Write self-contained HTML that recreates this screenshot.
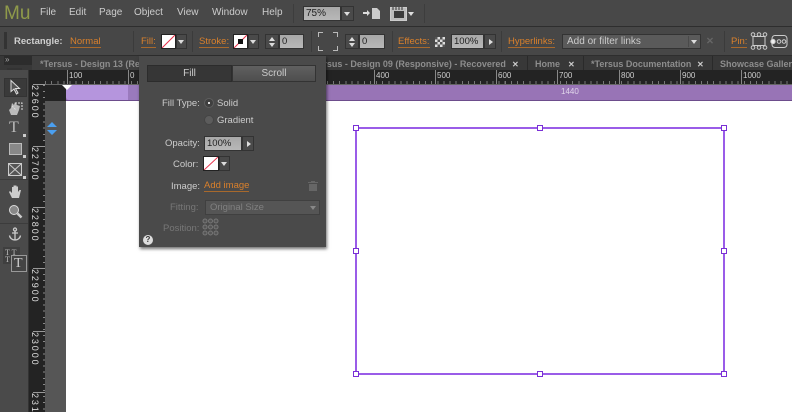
<!DOCTYPE html>
<html><head><meta charset="utf-8">
<style>
*{box-sizing:border-box;margin:0;padding:0}
html,body{width:792px;height:412px;overflow:hidden;background:#fff}
body{position:relative;font-family:"Liberation Sans",sans-serif;font-size:9.5px;color:#ccc}
.a{position:absolute}
.t{position:absolute;white-space:nowrap;line-height:12px}
.o{color:#d9802c;border-bottom:1px solid #a8692c;line-height:10px}
.b{font-weight:bold}
.m{font-size:10px;top:7px}
.btn{position:absolute;background:#4a4a4a;border:1px solid #333}
.inp{position:absolute;background:linear-gradient(#a8a8a8,#b8b8b8);border:1px solid #333;color:#222;line-height:13px;padding-left:2px;white-space:nowrap}
.ar{position:absolute;width:0;height:0;border-left:3px solid transparent;border-right:3px solid transparent;border-top:4px solid #ddd}
.ri{position:absolute;width:0;height:0;border-top:3px solid transparent;border-bottom:3px solid transparent;border-left:4px solid #ddd}
.sw{position:absolute;background:#fff;border:1px solid #222;overflow:hidden}
.tab{position:absolute;top:58px;color:#8d8d8d;font-weight:bold;font-size:9px;line-height:13px;white-space:nowrap}
.x{color:#ccc;font-size:8px}
.sp{position:absolute;top:56px;width:1px;height:14px;background:#2a2a2a}
.sep{position:absolute;top:31px;width:1px;height:21px;background:#3b3b3b}
.rl{position:absolute;top:70px;color:#ccc;font-size:8px;line-height:12px;border-left:1px solid #888;padding-left:1px;height:14px}
.vl{position:absolute;left:30px;width:9px;color:#ddd;font-size:9px;line-height:9px;writing-mode:vertical-rl;letter-spacing:1.9px;white-space:nowrap}
.vt{position:absolute;left:33px;width:12px;height:1px;background:#999}
.h{position:absolute;width:6px;height:6px;background:#fff;border:1px solid #7a2fd6}
</style></head><body>

<div class="a" style="left:0;top:0;width:792px;height:27px;background:#484848;border-bottom:1px solid #2e2e2e"></div>
<div class="t" style="left:4px;top:3px;font-size:19px;line-height:21px;color:#8f9a4a">Mu</div>
<div class="t m" style="left:40px">File</div>
<div class="t m" style="left:69px">Edit</div>
<div class="t m" style="left:99px">Page</div>
<div class="t m" style="left:134px">Object</div>
<div class="t m" style="left:177px">View</div>
<div class="t m" style="left:212px">Window</div>
<div class="t m" style="left:262px">Help</div>
<div class="a" style="left:293px;top:4px;width:1px;height:19px;background:#3d3d3d"></div>
<div class="inp" style="left:303px;top:6px;width:38px;height:15px;font-size:10px">75%</div>
<div class="btn" style="left:341px;top:6px;width:13px;height:15px"></div><div class="ar" style="left:344px;top:12px"></div>
<svg class="a" style="left:362px;top:7px" width="18" height="12" fill="#ddd"><path d="M1 5h4V3l3 3-3 3V7H1z"/><path d="M10 1h5l3 3v8h-8z" fill="#ccc"/></svg>
<svg class="a" style="left:390px;top:7px" width="24" height="14"><rect x=".5" y=".5" width="16" height="13" fill="#bbb" stroke="#ccc"/><rect x="4" y="4" width="10" height="7" fill="#3a3a3a"/><path d="M3 0v3M6 0v3M9 0v3M12 0v3" stroke="#333"/><path d="M18 5h6l-3 4z" fill="#ddd"/></svg>
<div class="a" style="left:424px;top:4px;width:1px;height:19px;background:#3d3d3d"></div>

<div class="a" style="left:0;top:27px;width:792px;height:29px;background:#474747;border-bottom:1px solid #2e2e2e"></div>
<div class="a" style="left:4px;top:32px;width:3px;height:17px;background:#333"></div>
<div class="sep" style="left:133px"></div><div class="sep" style="left:192px"></div><div class="sep" style="left:311px"></div><div class="sep" style="left:392px"></div><div class="sep" style="left:501px"></div><div class="sep" style="left:724px"></div>
<div class="t b" style="left:14px;top:36px;font-size:9.5px;color:#d0d0d0">Rectangle:</div>
<div class="t o" style="left:70px;top:37px">Normal</div>
<div class="t o" style="left:141px;top:37px">Fill:</div>
<div class="sw" style="left:161px;top:34px;width:15px;height:15px"><svg width="13" height="13" style="display:block"><line x1="0" y1="13" x2="13" y2="0" stroke="#e8304a"/></svg></div>
<div class="btn" style="left:176px;top:34px;width:11px;height:15px"></div><div class="ar" style="left:178px;top:40px"></div>
<div class="t o" style="left:199px;top:37px">Stroke:</div>
<div class="sw" style="left:233px;top:34px;width:15px;height:15px"><svg width="13" height="13" style="display:block"><line x1="0" y1="13" x2="13" y2="0" stroke="#e8304a"/><rect x="4" y="4" width="5" height="5" fill="#111"/></svg></div>
<div class="btn" style="left:248px;top:34px;width:11px;height:15px"></div><div class="ar" style="left:250px;top:40px"></div>
<div class="btn" style="left:265px;top:34px;width:14px;height:15px"></div>
<div class="inp" style="left:279px;top:34px;width:25px;height:15px">0</div>
<div class="ar" style="left:269px;top:43px"></div><div class="ar" style="left:269px;top:37px;transform:rotate(180deg)"></div>
<svg class="a" style="left:318px;top:32px" width="20" height="19" fill="none" stroke="#bbb"><path d="M.5 5V.5H5M15 .5h4.500V5M.5 14v4.500H5M15 18.500h4.500V14"/></svg>
<div class="btn" style="left:345px;top:34px;width:14px;height:15px"></div>
<div class="inp" style="left:359px;top:34px;width:26px;height:15px">0</div>
<div class="ar" style="left:349px;top:43px"></div><div class="ar" style="left:349px;top:37px;transform:rotate(180deg)"></div>
<div class="t o" style="left:398px;top:37px">Effects:</div>
<div class="a" style="left:435px;top:37px;width:10px;height:10px;background:repeating-conic-gradient(#ddd 0 25%,#555 0 50%) 0 0/5px 5px"></div>
<div class="inp" style="left:451px;top:34px;width:33px;height:15px">100%</div>
<div class="btn" style="left:484px;top:34px;width:12px;height:15px"></div><div class="ri" style="left:489px;top:39px"></div>
<div class="t o" style="left:508px;top:37px">Hyperlinks:</div>
<div class="a" style="left:562px;top:34px;width:139px;height:15px;background:#5a5a5a;border:1px solid #333;color:#ccc;line-height:13px;padding-left:4px;white-space:nowrap;font-size:10px">Add or filter links</div>
<div class="a" style="left:688px;top:36px;width:1px;height:11px;background:#4a4a4a"></div>
<div class="ar" style="left:691px;top:40px"></div>
<div class="t" style="left:706px;top:36px;color:#666;font-weight:bold">✕</div>
<div class="t o" style="left:731px;top:37px">Pin:</div>
<svg class="a" style="left:750px;top:32px" width="42" height="18" fill="none" stroke="#ccc"><path d="M3 4v10M15 4v10M3 4.500h12M3 13.500h12"/><g fill="#474747"><circle cx="3" cy="2.500" r="1.800"/><circle cx="9" cy="2.500" r="1.800"/><circle cx="15" cy="2.500" r="1.800"/><circle cx="3" cy="15.500" r="1.800"/><circle cx="9" cy="15.500" r="1.800"/><circle cx="15" cy="15.500" r="1.800"/></g><rect x="22" y="3.500" width="15" height="12" rx="3"/><circle cx="23" cy="9.500" r="2.200" fill="#eee"/><circle cx="29" cy="9.500" r="1.800"/><circle cx="34" cy="9.500" r="1.800"/></svg>

<div class="a" style="left:0;top:56px;width:792px;height:14px;background:#383838"></div>
<div class="a" style="left:32px;top:56px;width:110px;height:14px;background:#3f3f3f"></div>
<div class="a" style="left:4px;top:56px;width:28px;height:9px;background:#2c2c2c"></div>
<div class="t" style="left:5px;top:54px;font-size:8px;color:#aaa">»</div>
<div class="a" style="left:7px;top:68px;width:15px;height:3px;background:#333"></div>
<div class="tab" style="left:40px">*Tersus - Design 13 (Responsive)</div>
<div class="tab" style="left:310px">*Tersus - Design 09 (Responsive) - Recovered</div>
<div class="tab x" style="left:512px">✕</div>
<div class="sp" style="left:527px"></div>
<div class="tab" style="left:535px">Home</div>
<div class="tab x" style="left:568px">✕</div>
<div class="sp" style="left:583px"></div>
<div class="tab" style="left:591px">*Tersus Documentation</div>
<div class="tab x" style="left:697px">✕</div>
<div class="sp" style="left:712px"></div>
<div class="tab" style="left:720px">Showcase Gallery</div>

<div class="a" style="left:32px;top:70px;width:760px;height:15px;background:#232323"></div>
<div class="a" style="left:45px;top:81px;width:747px;height:3px;background:repeating-linear-gradient(90deg,#777 0 1px,transparent 1px 6.130px)"></div>
<div class="a" style="left:45px;top:84px;width:747px;height:1px;background:#666"></div>
<div class="rl" style="left:67px">100</div>
<div class="rl" style="left:128px">0</div>
<div class="rl" style="left:374px">400</div>
<div class="rl" style="left:435px">500</div>
<div class="rl" style="left:496px">600</div>
<div class="rl" style="left:557px">700</div>
<div class="rl" style="left:619px">800</div>
<div class="rl" style="left:680px">900</div>
<div class="rl" style="left:741px">1000</div>

<div class="a" style="left:66px;top:101px;width:726px;height:311px;background:#fff"></div>
<div class="a" style="left:66px;top:85px;width:726px;height:16px;background:#9874b6;border-bottom:1px solid #6d4d8c"></div>
<div class="a" style="left:66px;top:85px;width:62px;height:15px;background:#b595dd;border-radius:3px 0 0 3px"></div>
<div class="a" style="left:128px;top:85px;width:12px;height:15px;background:#9a7abd"></div>
<div class="t" style="left:561px;top:86px;font-size:8px;color:#e0d5ea">1440</div>

<div class="a" style="left:0;top:70px;width:29px;height:342px;background:#4a4a4a;border-right:1px solid #333"></div>
<div class="a" style="left:29px;top:70px;width:16px;height:342px;background:#232323"></div>
<div class="a" style="left:45px;top:85px;width:21px;height:327px;background:#565656"></div>
<div class="a" style="left:43px;top:85px;width:2px;height:327px;background:repeating-linear-gradient(#888 0 1px,transparent 1px 6.100px)"></div>
<div class="a" style="left:45px;top:85px;width:21px;height:16px;background:#232323"></div>
<div class="a" style="left:62px;top:85px;width:0;height:0;border-left:5px solid transparent;border-right:5px solid transparent;border-top:5px solid #fff"></div>

<div class="vt" style="top:84px"></div><div class="vl" style="top:85px">22600</div>
<div class="vt" style="top:146px"></div><div class="vl" style="top:147px">22700</div>
<div class="vt" style="top:207px"></div><div class="vl" style="top:208px">22800</div>
<div class="vt" style="top:268px"></div><div class="vl" style="top:269px">22900</div>
<div class="vt" style="top:331px"></div><div class="vl" style="top:332px">23000</div>
<div class="vt" style="top:392px"></div><div class="vl" style="top:393px">231</div>

<svg class="a" style="left:46px;top:122px" width="12" height="13"><path d="M6 0l5 5H1zM6 13l5-5H1z" fill="#4a9ff0"/></svg>

<div class="a" style="left:4px;top:78px;width:23px;height:19px;background:#3a3a3a;border:1px solid #333"></div>
<svg class="a" style="left:9px;top:79px" width="12" height="17"><path d="M2 1.500v11l3-2.500 2.500 5 1.500-1-2.500-4.500h4z" fill="#555" stroke="#ddd"/></svg>
<svg class="a" style="left:7px;top:99px" width="18" height="18"><path d="M4 16l-2-5 2-2 1-5 2 2 1-3 2 3 3 1-1 4-2 5z" fill="#bbb"/><path d="M8 4h7v7M5 7l4 4" stroke="#ddd" fill="none" stroke-dasharray="2 1"/></svg>
<div class="t" style="left:9px;top:120px;font-family:'Liberation Serif',serif;font-size:16px;line-height:16px;color:#bbb">T</div>
<div class="a" style="left:23px;top:134px;width:3px;height:3px;background:#ccc"></div>
<div class="a" style="left:9px;top:143px;width:13px;height:12px;background:#888;border:1px solid #bbb"></div>
<div class="a" style="left:23px;top:155px;width:3px;height:3px;background:#ccc"></div>
<svg class="a" style="left:8px;top:163px" width="14" height="13"><rect x=".5" y=".5" width="13" height="12" fill="#555" stroke="#ccc"/><path d="M1 1l12 11M13 1L1 12" stroke="#ccc"/></svg>
<div class="a" style="left:23px;top:176px;width:3px;height:3px;background:#ccc"></div>
<div class="a" style="left:0;top:179px;width:28px;height:1px;background:#3c3c3c"></div>
<svg class="a" style="left:8px;top:184px" width="15" height="15"><path d="M4 14L1 8l1-1 2 2V3h1.500v4V1.500H7V7V1.500h1.500V7V2.500H10V8l1.500-2H13l-2 8z" fill="#ccc"/></svg>
<svg class="a" style="left:8px;top:204px" width="15" height="15" fill="none"><circle cx="6" cy="6" r="4.500" fill="#888" stroke="#ddd"/><path d="M9.500 9.500l4 4" stroke="#ccc" stroke-width="2.500"/></svg>
<div class="a" style="left:0;top:223px;width:28px;height:1px;background:#3c3c3c"></div>
<svg class="a" style="left:8px;top:227px" width="14" height="14" fill="none" stroke="#ccc" stroke-width="1.300"><circle cx="7" cy="2.500" r="1.500"/><path d="M7 4v9M4 6h6M1.500 8.500C2 11.500 4.500 13 7 13s5-1.500 5.500-4.500"/></svg>
<div class="a" style="left:3px;top:247px;width:17px;height:17px;background:#3f3f3f"></div>
<div class="t" style="left:5px;top:249px;font-family:'Liberation Serif',serif;font-size:8px;line-height:7px;color:#bbb;white-space:pre">T T
T</div>
<div class="a" style="left:11px;top:255px;width:16px;height:17px;background:#444;border:1px solid #999"></div>
<div class="t" style="left:14px;top:256px;font-family:'Liberation Serif',serif;font-size:14px;line-height:15px;color:#ccc">T</div>

<div class="a" style="left:355px;top:127px;width:370px;height:248px;border:2px solid #9a5ce8"></div>
<div class="h" style="left:353px;top:125px"></div>
<div class="h" style="left:537px;top:125px"></div>
<div class="h" style="left:721px;top:125px"></div>
<div class="h" style="left:353px;top:248px"></div>
<div class="h" style="left:721px;top:248px"></div>
<div class="h" style="left:353px;top:371px"></div>
<div class="h" style="left:537px;top:371px"></div>
<div class="h" style="left:721px;top:371px"></div>

<div class="a" style="left:139px;top:56px;width:187px;height:191px;background:#4a4a4a;box-shadow:1px 2px 3px rgba(0,0,0,.55)"></div>
<div class="a" style="left:147px;top:65px;width:85px;height:17px;background:#363636;border:1px solid #2c2c2c;color:#ccc;text-align:center;line-height:15px;font-size:10px">Fill</div>
<div class="a" style="left:232px;top:65px;width:84px;height:17px;background:linear-gradient(#606060,#4e4e4e);border:1px solid #333;color:#ccc;text-align:center;line-height:15px;font-size:10px">Scroll</div>
<div class="t" style="left:162px;top:98px">Fill Type:</div>
<div class="a" style="left:204px;top:98px;width:10px;height:10px;border-radius:50%;background:#3f3f3f;border:1px solid #5e5e5e"></div>
<div class="a" style="left:208px;top:102px;width:2px;height:2px;background:#ddd"></div>
<div class="t" style="left:217px;top:98px">Solid</div>
<div class="a" style="left:204px;top:115px;width:10px;height:10px;border-radius:50%;background:#5c5c5c;border:1px solid #444"></div>
<div class="t" style="left:217px;top:115px">Gradient</div>
<div class="t" style="left:165px;top:138px">Opacity:</div>
<div class="inp" style="left:204px;top:136px;width:38px;height:15px">100%</div>
<div class="btn" style="left:242px;top:136px;width:12px;height:15px"></div><div class="ri" style="left:247px;top:141px"></div>
<div class="t" style="left:173px;top:159px">Color:</div>
<div class="sw" style="left:203px;top:156px;width:16px;height:15px"><svg width="14" height="13" style="display:block"><line x1="0" y1="13" x2="14" y2="0" stroke="#e8304a"/></svg></div>
<div class="btn" style="left:219px;top:156px;width:11px;height:15px"></div><div class="ar" style="left:221px;top:162px"></div>
<div class="t" style="left:171px;top:181px">Image:</div>
<div class="t o" style="left:204px;top:181px">Add image</div>
<svg class="a" style="left:308px;top:181px" width="10" height="10" fill="#666"><path d="M3 0h4v1h3v1H0V1h3zM1 3h8v7H1z"/></svg>
<div class="t" style="left:170px;top:202px;color:#777">Fitting:</div>
<div class="a" style="left:205px;top:200px;width:115px;height:15px;background:#555;border:1px solid #404040;color:#808080;line-height:13px;padding-left:4px;white-space:nowrap">Original Size</div>
<div class="ar" style="left:310px;top:206px;border-top-color:#888"></div>
<div class="t" style="left:163px;top:223px;color:#777">Position:</div>
<svg class="a" style="left:202px;top:218px" width="18" height="18" fill="#555" stroke="#777"><circle cx="3" cy="3" r="2"/><circle cx="8.500" cy="3" r="2"/><circle cx="14" cy="3" r="2"/><circle cx="3" cy="9" r="2"/><circle cx="8.500" cy="9" r="2"/><circle cx="14" cy="9" r="2"/><circle cx="3" cy="15" r="2"/><circle cx="8.500" cy="15" r="2"/><circle cx="14" cy="15" r="2"/></svg>
<div class="a" style="left:143px;top:235px;width:10px;height:10px;border-radius:50%;background:#ddd;color:#333;font-size:8px;font-weight:bold;line-height:10px;text-align:center">?</div>

</body></html>
